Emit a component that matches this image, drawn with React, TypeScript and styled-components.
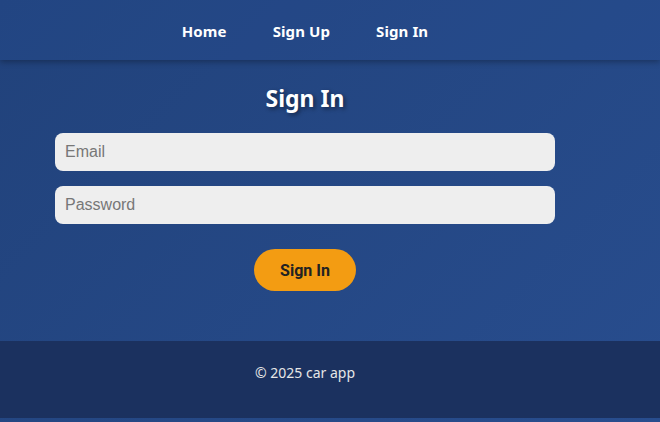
import React from "react";
import styled, { createGlobalStyle } from "styled-components";

const Global = createGlobalStyle`
  html, body { margin: 0; padding: 0; min-height: 100%; }
  html { background: linear-gradient(135deg, #21427b 0%, #284d8e 100%); min-height: 100vh; }
  body { font-family: "Noto Sans", "Open Sans", sans-serif; color: #fff; }
`;

const Page = styled.div`
  display: flex;
  flex-direction: column;
`;

const Header = styled.header`
  height: 60px;
  background: rgba(40, 80, 150, 0.25);
  box-shadow: 0 2px 6px rgba(0, 0, 0, 0.3);
  display: flex;
`;

const Inner = styled.div`
  width: 610px;
  display: flex;
  flex-direction: column;
  align-items: center;
`;

const Nav = styled.nav`
  width: 610px;
  display: flex;
  justify-content: center;
  align-items: center;
  gap: 46px;
  padding-top: 2px;
`;

const NavLink = styled.a`
  color: #fff;
  font-weight: 700;
  font-size: 15px;
  text-decoration: none;
  letter-spacing: 0.1px;
`;

const Main = styled.main`
  height: 281px;
  display: flex;
`;

const Title = styled.h2`
  margin: 22px 0 0;
  font-size: 23px;
  line-height: 32px;
  font-weight: 700;
  text-shadow: 2px 2px 4px rgba(0, 0, 0, 0.45);
`;

const Form = styled.form`
  width: 500px;
  margin-top: 19px;
  display: flex;
  flex-direction: column;
  align-items: center;
  gap: 15px;
`;

const Input = styled.input`
  box-sizing: border-box;
  width: 100%;
  height: 38px;
  border: none;
  border-radius: 8px;
  background: #eeeeee;
  padding: 0 10px;
  font-family: "Liberation Sans", Arial, sans-serif;
  font-size: 16px;
  outline: none;
  &::placeholder { color: #777; }
`;

const Button = styled.button`
  margin-top: 10px;
  width: 102px;
  height: 42px;
  border: none;
  border-radius: 21px;
  background: #f39c12;
  color: #222;
  font-family: Roboto, sans-serif;
  font-weight: 700;
  font-size: 16px;
  cursor: pointer;
`;

const Footer = styled.footer`
  height: 77px;
  background: #1b315f;
  display: flex;
`;

const FooterText = styled.p`
  margin: 21px 0 0;
  font-size: 14px;
  line-height: 21px;
  color: #e6e6e6;
`;

export default function App() {
  return (
    <>
      <Global />
      <Page>
        <Header>
          <Nav>
            <NavLink href="#">Home</NavLink>
            <NavLink href="#">Sign Up</NavLink>
            <NavLink href="#">Sign In</NavLink>
          </Nav>
        </Header>
        <Main>
          <Inner>
            <Title>Sign In</Title>
            <Form onSubmit={(e) => e.preventDefault()}>
              <Input type="email" placeholder="Email" />
              <Input type="password" placeholder="Password" />
              <Button type="submit">Sign In</Button>
            </Form>
          </Inner>
        </Main>
        <Footer>
          <Inner>
            <FooterText>© 2025 car app</FooterText>
          </Inner>
        </Footer>
      </Page>
    </>
  );
}
